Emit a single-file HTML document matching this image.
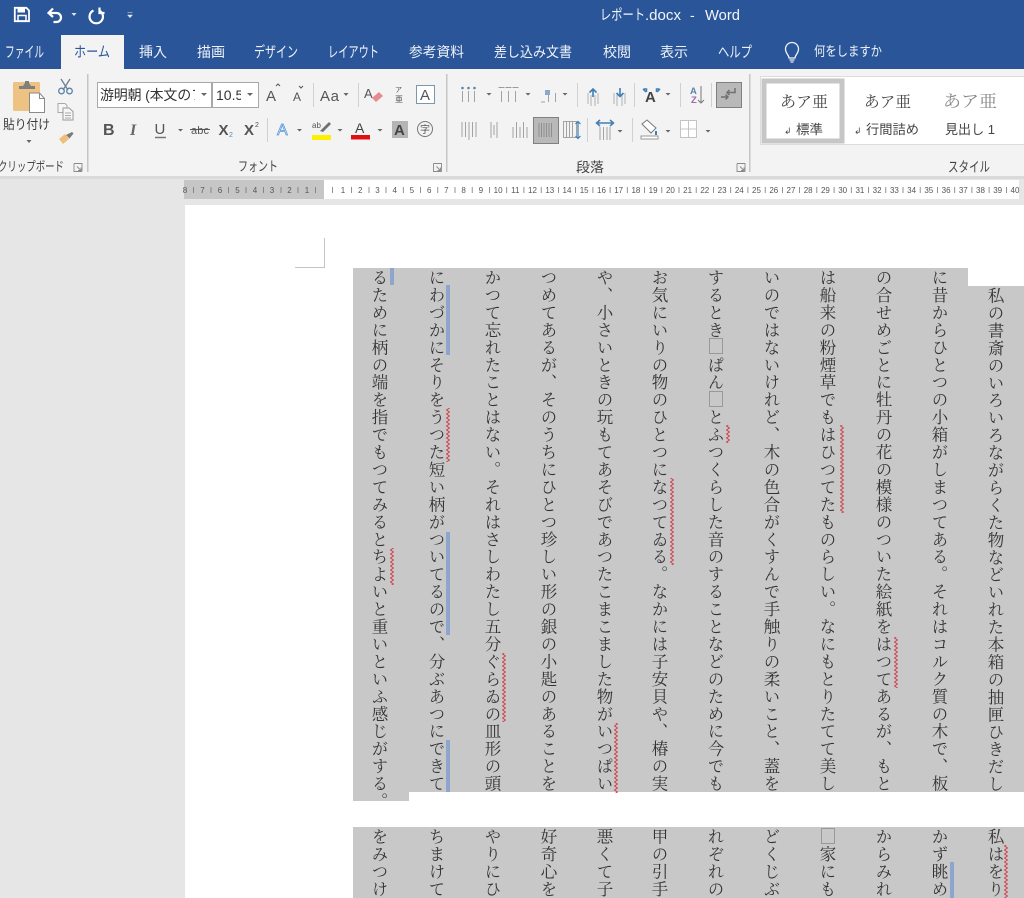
<!DOCTYPE html>
<html lang="ja">
<head>
<meta charset="utf-8">
<title>レポート.docx - Word</title>
<style>
html,body{margin:0;padding:0;width:1024px;height:898px;overflow:hidden;background:#e6e6e6}
#root{position:absolute;left:0;top:0;width:1024px;height:898px;overflow:hidden;background:#e6e6e6;filter:blur(.3px)}
#page{position:absolute;left:185px;top:205px;width:839px;height:693px;background:#fff}
.sh{position:absolute;background:#c8c8c8}
.c{position:absolute;width:30px;writing-mode:vertical-rl;line-height:30px;font-size:16.5px;letter-spacing:.95px;white-space:nowrap;color:#333;
font-family:"Noto Serif CJK SC","Liberation Serif",serif;font-weight:400;margin-top:.5px}
.b{position:absolute;width:12px;height:14px;border:1px solid #999}
#root>svg{position:absolute;left:0;top:0}
.u{font-family:"Liberation Sans","Noto Sans CJK JP",sans-serif}
.m{font-family:"Liberation Serif","Noto Serif CJK SC",serif}
</style>
</head>
<body>
<div id="root">
<div id="page"></div>
<div class="sh" style="left:353px;top:268px;width:615px;height:524px"></div>
<div class="sh" style="left:968px;top:286px;width:56px;height:506px"></div>
<div class="sh" style="left:353px;top:792px;width:56px;height:9px"></div>
<div class="sh" style="left:353px;top:827px;width:671px;height:71px"></div>

<div class="c" lang="ja" style="left:981px;top:286px">私の書斎のいろいろながらくた物などいれた本箱の抽匣ひきだし</div>
<div class="c" lang="ja" style="left:925px;top:268px">に昔からひとつの小箱がしまつてある。それはコルク質の木で、板</div>
<div class="c" lang="ja" style="left:869px;top:268px">の合せめごとに牡丹の花の模様のついた絵紙をはつてあるが、もと</div>
<div class="c" lang="ja" style="left:813px;top:268px">は船来の粉煙草でもはひつてたものらしい。なにもとりたてて美し</div>
<div class="c" lang="ja" style="left:757px;top:268px">いのではないけれど、木の色合がくすんで手触りの柔いこと、蓋を</div>
<div class="c" lang="ja" style="left:701px;top:268px">するとき　ぱん　とふつくらした音のすることなどのために今でも</div>
<div class="c" lang="ja" style="left:645px;top:268px">お気にいりの物のひとつになつてゐる。なかには子安貝や、椿の実</div>
<div class="c" lang="ja" style="left:590px;top:268px">や、小さいときの玩もてあそびであつたこまこました物がいつぱい</div>
<div class="c" lang="ja" style="left:534px;top:268px">つめてあるが、そのうちにひとつ珍しい形の銀の小匙のあることを</div>
<div class="c" lang="ja" style="left:478px;top:268px">かつて忘れたことはない。それはさしわたし五分ぐらゐの皿形の頭</div>
<div class="c" lang="ja" style="left:422px;top:268px">にわづかにそりをうつた短い柄がついてるので、分ぶあつにできて</div>
<div class="c" lang="ja" style="left:365px;top:268px">るために柄の端を指でもつてみるとちよいと重いといふ感じがする。</div>

<div class="c" lang="ja" style="left:981px;top:827px">私はをり</div>
<div class="c" lang="ja" style="left:925px;top:827px">かず眺め</div>
<div class="c" lang="ja" style="left:869px;top:827px">からみれ、</div>
<div class="c" lang="ja" style="left:813px;top:827px">　家にも</div>
<div class="c" lang="ja" style="left:757px;top:827px">どくじぶ</div>
<div class="c" lang="ja" style="left:701px;top:827px">れぞれの</div>
<div class="c" lang="ja" style="left:645px;top:827px">甲の引手</div>
<div class="c" lang="ja" style="left:590px;top:827px">悪くて子</div>
<div class="c" lang="ja" style="left:534px;top:827px">好奇心を</div>
<div class="c" lang="ja" style="left:478px;top:827px">やりにひ</div>
<div class="c" lang="ja" style="left:422px;top:827px">ちまけて</div>
<div class="c" lang="ja" style="left:365px;top:827px">をみつけ</div>

<div class="b" style="left:709px;top:338px"></div>
<div class="b" style="left:709px;top:391px"></div>
<div class="b" style="left:821px;top:828px"></div>

<svg width="1024" height="898" viewBox="0 0 1024 898" xmlns="http://www.w3.org/2000/svg">
<defs>
<pattern id="zz" x="0" y="0" width="4" height="4" patternUnits="userSpaceOnUse">
<path d="M3.500 0L.5 2L3.500 4" fill="none" stroke="#d0404c" stroke-width="1" stroke-linecap="square"/>
</pattern>
</defs>

<!-- title bar -->
<rect width="1024" height="69" fill="#2a5699"/>
<path d="M14.800 7.800h11.500l2.700 2.700v10.700h-14.200z" fill="none" stroke="#fff" stroke-width="1.800"/>
<rect x="17.500" y="8" width="7.500" height="4.500" fill="#fff"/>
<rect x="18" y="15.500" width="8" height="5.500" fill="none" stroke="#fff" stroke-width="1.500"/>
<path d="M53 8.500L48.500 13L53 17M49 13H56.500a4.500 4.500 0 0 1 0 9h-3" fill="none" stroke="#fff" stroke-width="2.200"/>
<path d="M71.500 13h5l-2.500 3z" fill="#dde6f2"/>
<path d="M93.500 10.500a6.700 6.700 0 1 0 5.500 0M99.500 7.500v5.500h5" fill="none" stroke="#fff" stroke-width="2.200"/>
<path d="M127.500 12.500h5M127.500 15h5l-2.500 2.800z" fill="#dde6f2" stroke="#dde6f2" stroke-width=".5"/>
<text x="600" y="20" textLength="45" lengthAdjust="spacingAndGlyphs" class="u" font-size="14.500" fill="#f2f5fa">レポート</text>
<text x="645" y="20" textLength="36" lengthAdjust="spacingAndGlyphs" class="u" font-size="14.500" fill="#f2f5fa">.docx</text>
<text x="690" y="20" class="u" font-size="14" fill="#f2f5fa">-</text>
<text x="705" y="20" textLength="35" lengthAdjust="spacingAndGlyphs" class="u" font-size="14.500" fill="#f2f5fa">Word</text>

<!-- tabs -->
<g class="u" font-size="14" fill="#eef2f8">
<text x="5" y="57" textLength="39" lengthAdjust="spacingAndGlyphs" font-size="15">ファイル</text>
<text x="139" y="57" textLength="28" lengthAdjust="spacingAndGlyphs">挿入</text>
<text x="197" y="57" textLength="28" lengthAdjust="spacingAndGlyphs">描画</text>
<text x="254" y="57" textLength="44" lengthAdjust="spacingAndGlyphs" font-size="15">デザイン</text>
<text x="328" y="57" textLength="51" lengthAdjust="spacingAndGlyphs" font-size="15">レイアウト</text>
<text x="409" y="57" textLength="55" lengthAdjust="spacingAndGlyphs">参考資料</text>
<text x="494" y="57" textLength="78" lengthAdjust="spacingAndGlyphs">差し込み文書</text>
<text x="603" y="57" textLength="28" lengthAdjust="spacingAndGlyphs">校閲</text>
<text x="660" y="57" textLength="28" lengthAdjust="spacingAndGlyphs">表示</text>
<text x="718" y="57" textLength="34" lengthAdjust="spacingAndGlyphs" font-size="15">ヘルプ</text>
<text x="814" y="56" textLength="68" lengthAdjust="spacingAndGlyphs" font-size="13.500">何をしますか</text>
</g>
<path d="M789 58c0-3-3.500-4.500-3.500-9a6.500 6.500 0 0 1 13 0c0 4.500-3.500 6-3.500 9zM789.500 60h5M790.500 62h3" fill="none" stroke="#eef2f8" stroke-width="1.300"/>

<!-- ribbon -->
<rect y="69" width="1024" height="107" fill="#f3f3f3"/>
<rect y="176" width="1024" height="3" fill="#dadada"/>
<rect x="61" y="35" width="63" height="35" fill="#f3f3f3"/>
<text x="74" y="57" textLength="36" lengthAdjust="spacingAndGlyphs" class="u" font-size="14.500" fill="#2a5699">ホーム</text>
<g fill="#c6c6c6">
<rect x="87" y="74" width="1.500" height="98"/>
<rect x="446" y="74" width="1.500" height="98"/>
<rect x="749" y="74" width="1.500" height="98"/>
</g>

<!-- clipboard group -->
<rect x="13" y="82" width="27" height="29" rx="1.500" fill="#edc283"/>
<path d="M19 86h4l2-3v-2h4v2l2 3h4v3H19z" fill="#7f7f7f"/>
<path d="M29.500 93h10l5 5.500v14h-15z" fill="#fff" stroke="#8a8a8a"/>
<path d="M39.500 93v5.500h5" fill="none" stroke="#8a8a8a"/>
<text x="3" y="129" textLength="47" lengthAdjust="spacingAndGlyphs" class="u" font-size="13" fill="#3c3c3c">貼り付け</text>
<path d="M26.500 140h5l-2.500 3z" fill="#666"/>
<path d="M61 79l7 11M70 79l-7 11" stroke="#6b7f95" stroke-width="1.300" fill="none"/>
<circle cx="61.500" cy="91" r="2.800" fill="none" stroke="#5b84ab" stroke-width="1.300"/>
<circle cx="69.500" cy="91" r="2.800" fill="none" stroke="#5b84ab" stroke-width="1.300"/>
<path d="M58 103.500h7l2 2v7h-9z" fill="#f6f6f6" stroke="#aaa"/>
<path d="M63 108h6l4 3.500v8.500H63z" fill="#f6f6f6" stroke="#9a9a9a"/>
<path d="M65 113h6M65 115.500h6M65 118h6" stroke="#aaa"/>
<path d="M59 139l6-5 4 5-6 5z" fill="#eebf78"/>
<path d="M66 135l6-3 1.500 1.500-4 5z" fill="#7a7a7a"/>
<text x="-2" y="171" textLength="66" lengthAdjust="spacingAndGlyphs" class="u" font-size="13" fill="#444">クリップボード</text>
<g fill="none" stroke="#8a8a8a" stroke-width=".9">
<path d="M74 163.500h8v8M74 163.500v8h8M77 166.500l4 4M81 167.500v3h-3"/>
<path d="M433.500 163.500h8v8M433.500 163.500v8h8M436.500 166.500l4 4M440.500 167.500v3h-3"/>
<path d="M737 163.500h8v8M737 163.500v8h8M740 166.500l4 4M744 167.500v3h-3"/>
</g>

<!-- font group -->
<rect x="97.500" y="82.500" width="114" height="25" fill="#fff" stroke="#a8a8a8"/>
<rect x="212.500" y="82.500" width="46" height="25" fill="#fff" stroke="#a8a8a8"/>
<svg x="98" y="83" width="97" height="24"><text x="2" y="17" class="u" font-size="14" fill="#333" textLength="105">游明朝 (本文のフ</text></svg>
<svg x="213" y="83" width="28" height="24"><text x="3" y="17" class="u" font-size="14" fill="#333">10.5</text></svg>
<g fill="#666">
<path d="M201 93h6l-3 3z"/><path d="M247 93h6l-3 3z"/>
<path d="M343.500 93h5l-2.500 3z"/>
<path d="M178 129h5l-2.500 2.500z"/><path d="M297 129h5l-2.500 2.500z"/><path d="M337.500 129h5l-2.500 2.500z"/><path d="M377.500 129h5l-2.500 2.500z"/>
<path d="M486.500 93h5l-2.500 2.500z"/><path d="M525.500 93h5l-2.500 2.500z"/><path d="M562.500 93h5l-2.500 2.500z"/><path d="M665.500 93h5l-2.500 2.500z"/>
<path d="M617.500 130h5l-2.500 2.500z"/><path d="M665.500 130h5l-2.500 2.500z"/><path d="M705.500 130h5l-2.500 2.500z"/>
</g>
<g class="u" fill="#555">
<text x="266" y="101" font-size="15">A</text>
<path d="M276 86l2-2 2 2" fill="none" stroke="#555"/>
<text x="293" y="101" font-size="12">A</text>
<path d="M299 86l2 2 2-2" fill="none" stroke="#555"/>
<text x="320" y="101" font-size="15" textLength="19">Aa</text>
<text x="364" y="98" font-size="13" fill="#555">A</text>
<text x="395" y="92" font-size="7">ア</text>
<text x="395" y="102" font-size="8">亜</text>
<text x="103" y="135" font-size="16" font-weight="700" fill="#555">B</text>
<text x="130" y="135" font-size="16" font-weight="700" font-style="italic" fill="#666" class="m">I</text>
<text x="154.500" y="134" font-size="15" fill="#555">U</text>
<text x="191" y="134" font-size="11" fill="#555" textLength="18">abc</text>
<text x="218.500" y="135" font-size="15" fill="#555" font-weight="700">X</text>
<text x="229" y="137" font-size="7" fill="#5b84ab">2</text>
<text x="244" y="135" font-size="15" fill="#555" font-weight="700">X</text>
<text x="255" y="127" font-size="7" fill="#555">2</text>
<text x="355" y="133" font-size="14" fill="#444">A</text>
<text x="277" y="135" font-size="16" fill="#e8eff7" stroke="#5b9bd5" stroke-width=".8">A</text>
<text x="312" y="128" font-size="8" fill="#555">ab</text>
</g>
<rect x="416.500" y="85.500" width="18" height="18" fill="#fff" stroke="#7f95a8"/>
<text x="420" y="100" class="u" font-size="15" fill="#555">A</text>
<path d="M155 137.500h11" stroke="#777" stroke-width="1.500"/>
<path d="M190 129.500h20" stroke="#555"/>
<path d="M372 98l7-6 4 4-7 6z" fill="#e88a90"/>
<rect x="392" y="121" width="16" height="17" fill="#b5b5b5"/>
<text x="394" y="135" class="u" font-size="15" fill="#444" font-weight="700">A</text>
<path d="M320 131l9-9 2 2-8 8z" fill="#707070"/>
<rect x="312" y="135" width="19" height="5" fill="#fdf000"/>
<rect x="351" y="135" width="19" height="4.500" fill="#e01010"/>
<circle cx="425" cy="129" r="7.500" fill="none" stroke="#777"/>
<text x="420" y="133" class="u" font-size="10" fill="#555">字</text>
<rect x="313" y="83" width="1" height="24" fill="#d0d0d0"/>
<rect x="358" y="83" width="1" height="24" fill="#d0d0d0"/>
<rect x="267" y="118" width="1" height="24" fill="#d0d0d0"/>
<text x="238" y="171" textLength="40" lengthAdjust="spacingAndGlyphs" class="u" font-size="13.500" fill="#444">フォント</text>

<!-- paragraph group -->
<g fill="none" stroke="#a3a3a3" stroke-width="1">
<path d="M462.500 91v11M468.500 91v11M474.500 91v11"/>
<path d="M501.500 91v11M508.500 91v11M515.500 91v11"/>
<path d="M541 102h4M548.500 93v9M555.500 93v9"/>
<path d="M462 122v15M465.500 122v15M469 122v18M472.500 122v15M476 122v15"/>
<path d="M491 122v16M494 125v10M497 122v16"/>
<path d="M513 127v11M516.500 122v16M520 127v11M523.500 122v16M527 127v11"/>
<path d="M563.500 121.500h13v16h-13zM566.500 122v15M569.500 122v15M572.500 122v15"/>
<path d="M600 127v13M603.500 127v13M607 127v13M610 127v13"/>
</g>
<g fill="#5b84ab">
<circle cx="462.500" cy="88" r="1.300"/><circle cx="468.500" cy="88" r="1.300"/><circle cx="474.500" cy="88" r="1.300"/>
<path d="M498.500 87h6v1h-6zM505.500 87h6v1h-6zM512.500 87h6v1h-6z" fill="#9a9a9a"/>
<rect x="545" y="90" width="5" height="5" fill="#8aa9c6"/>
</g>
<rect x="533.500" y="117.500" width="25" height="26" fill="#b9b9b9" stroke="#808080"/>
<path d="M539 123v14M541.500 123v14M544 123v14M546.500 123v14M549 123v14M551.500 123v14" stroke="#8f8f8f" fill="none"/>
<path d="M578 122v16M575.500 124l2.500-2.500 2.500 2.500M575.500 136l2.500 2.500 2.500-2.500" stroke="#3f7fb5" fill="none" stroke-width="1.200"/>
<path d="M597 123h16M600 120l-3.500 3 3.500 3M610 120l3.500 3-3.500 3" stroke="#3f7fb5" fill="none" stroke-width="1.500"/>
<path d="M588 93v11M591 95v11M595 95v11M598 93v11" stroke="#b0b0b0" fill="none"/>
<path d="M593 97v-7M589.500 92.500l3.500-3.500 3.500 3.500" stroke="#3f7fb5" fill="none" stroke-width="1.600"/>
<path d="M614 93v11M617 95v11M622 95v11M625 93v11" stroke="#b0b0b0" fill="none"/>
<path d="M620 88v8M616.500 93l3.500 3.500 3.500-3.500" stroke="#3f7fb5" fill="none" stroke-width="1.600"/>
<text x="645" y="102" class="u" font-size="15" font-weight="700" fill="#444">A</text>
<path d="M643 89l3 3M660 89l-3 3M643.500 89h3v3M659.500 89h-3v3" stroke="#3f7fb5" fill="none" stroke-width="1.500"/>
<text x="690" y="94" class="u" font-size="9.500" font-weight="700" fill="#5b84ab">A</text>
<text x="691" y="103" class="u" font-size="9.500" font-weight="700" fill="#9a6ea8">Z</text>
<path d="M701 86v17M698 100l3 3 3-3" stroke="#777" fill="none"/>
<rect x="716.500" y="82.500" width="25" height="25" fill="#b9b9b9" stroke="#808080"/>
<path d="M735 88v4.500h-8M729.500 90l-2.500 2.500 2.500 2.500M721 97h7M725.500 94.500l2.500 2.500-2.500 2.500" stroke="#707070" fill="none" stroke-width="1.500"/>
<path d="M642 124l5-4 9 8-5 5z" fill="#fff" stroke="#777"/>
<path d="M641 136h17v3h-17z" fill="#fff" stroke="#999"/>
<path d="M656 131v4" stroke="#3f7fb5" stroke-width="2"/>
<path d="M680.500 120.500h16v17h-16zM688.500 121v16M681 129h15" fill="#fff" stroke="#c4c4c4"/>
<g fill="#d0d0d0">
<rect x="577" y="83" width="1" height="24"/><rect x="634" y="83" width="1" height="24"/><rect x="680" y="83" width="1" height="24"/><rect x="711" y="83" width="1" height="24"/>
<rect x="587" y="118" width="1" height="24"/><rect x="632" y="118" width="1" height="24"/>
</g>
<text x="576" y="172" textLength="28" lengthAdjust="spacingAndGlyphs" class="u" font-size="13.500" fill="#444">段落</text>

<!-- styles -->
<rect x="760.500" y="76.500" width="270" height="68" fill="#fff" stroke="#dcdcdc"/>
<rect x="764" y="81" width="78" height="60" fill="#fff" stroke="#c6c6c6" stroke-width="5"/>
<g class="m" font-size="15.500" fill="#444">
<text x="780" y="107" textLength="48" lengthAdjust="spacingAndGlyphs">あア亜</text>
<text x="864" y="107" textLength="47" lengthAdjust="spacingAndGlyphs">あア亜</text>
<text x="943" y="107" textLength="54" lengthAdjust="spacingAndGlyphs" font-size="17" fill="#8a8a8a">あア亜</text>
</g>
<g class="u" font-size="13" fill="#444">
<text x="784" y="134" font-size="9">↲</text>
<text x="796" y="134" textLength="27" lengthAdjust="spacingAndGlyphs">標準</text>
<text x="854" y="134" font-size="9">↲</text>
<text x="866" y="134" textLength="53" lengthAdjust="spacingAndGlyphs">行間詰め</text>
<text x="945" y="134" textLength="50" lengthAdjust="spacingAndGlyphs">見出し 1</text>
</g>
<text x="948" y="172" textLength="42" lengthAdjust="spacingAndGlyphs" class="u" font-size="14" fill="#444">スタイル</text>

<!-- ruler -->
<rect x="184" y="180" width="140" height="19" fill="#c6c6c6"/>
<rect x="324" y="180" width="695" height="19" fill="#fff"/>
<g class="u" font-size="8" fill="#555" text-anchor="middle">
<text x="185" y="193">8</text><text x="202.500" y="193">7</text><text x="220" y="193">6</text><text x="237.500" y="193">5</text><text x="255" y="193">4</text><text x="272" y="193">3</text><text x="289.500" y="193">2</text><text x="307" y="193">1</text>
<text x="343" y="193">1</text><text x="360.200" y="193">2</text><text x="377.500" y="193">3</text><text x="394.700" y="193">4</text><text x="411.900" y="193">5</text><text x="429.200" y="193">6</text><text x="446.400" y="193">7</text><text x="463.600" y="193">8</text><text x="480.800" y="193">9</text><text x="498.100" y="193">10</text><text x="515.300" y="193">11</text><text x="532.500" y="193">12</text><text x="549.800" y="193">13</text><text x="567" y="193">14</text><text x="584.200" y="193">15</text><text x="601.500" y="193">16</text><text x="618.700" y="193">17</text><text x="635.900" y="193">18</text><text x="653.100" y="193">19</text><text x="670.400" y="193">20</text><text x="687.600" y="193">21</text><text x="704.800" y="193">22</text><text x="722.100" y="193">23</text><text x="739.300" y="193">24</text><text x="756.500" y="193">25</text><text x="773.800" y="193">26</text><text x="791" y="193">27</text><text x="808.200" y="193">28</text><text x="825.400" y="193">29</text><text x="842.700" y="193">30</text><text x="859.900" y="193">31</text><text x="877.100" y="193">32</text><text x="894.400" y="193">33</text><text x="911.600" y="193">34</text><text x="928.800" y="193">35</text><text x="946.100" y="193">36</text><text x="963.300" y="193">37</text><text x="980.500" y="193">38</text><text x="997.700" y="193">39</text><text x="1015" y="193">40</text>
</g>
<path d="M193.500 187v6M211 187v6M228.500 187v6M246 187v6M263.500 187v6M281 187v6M298 187v6M315.500 187v6M332.500 187v6M351.500 187v6M369 187v6M386 187v6M403.300 187v6M420.500 187v6M437.800 187v6M455 187v6M472.200 187v6M489.500 187v6M506.700 187v6M523.900 187v6M541.200 187v6M558.400 187v6M575.600 187v6M592.900 187v6M610.100 187v6M627.300 187v6M644.500 187v6M661.800 187v6M679 187v6M696.200 187v6M713.500 187v6M730.700 187v6M747.900 187v6M765.200 187v6M782.400 187v6M799.600 187v6M816.800 187v6M834.100 187v6M851.300 187v6M868.500 187v6M885.800 187v6M903 187v6M920.200 187v6M937.500 187v6M954.700 187v6M971.900 187v6M989.100 187v6M1006.400 187v6" stroke="#777" stroke-width=".8" fill="none"/>

<!-- crop mark -->
<path d="M324.500 238v29.500H295" fill="none" stroke="#c4c4c4"/>

<!-- red squiggles -->
<g fill="url(#zz)">
<rect x="672" y="478" width="4" height="87" transform="translate(-2 0)"/>
<rect x="448" y="408" width="4" height="54" transform="translate(-2 0)"/>
<rect x="728" y="425" width="4" height="18" transform="translate(-2 0)"/>
<rect x="840" y="425" width="4" height="88"/>
<rect x="896" y="637" width="4" height="51" transform="translate(-2 0)"/>
<rect x="392" y="548" width="4" height="37" transform="translate(-2 0)"/>
<rect x="504" y="653" width="4" height="69" transform="translate(-2 0)"/>
<rect x="616" y="723" width="4" height="70" transform="translate(-2 0)"/>
<rect x="1004" y="845" width="4" height="53"/>
</g>
<!-- blue double lines -->
<g fill="#8fa6cc">
<rect x="390" y="268" width="4" height="17"/>
<rect x="446" y="285" width="4" height="70"/>
<rect x="446" y="532" width="4" height="103"/>
<rect x="446" y="740" width="4" height="52"/>
<rect x="950" y="862" width="4" height="36"/>
</g>
</svg>
</div>
</body>
</html>
